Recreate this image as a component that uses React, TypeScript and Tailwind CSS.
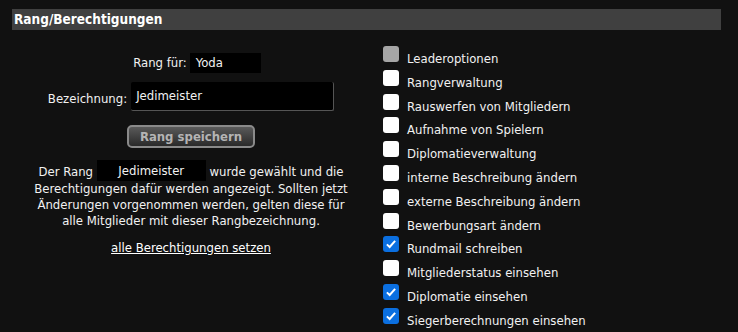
import React from 'react';

const rights: { label: string; state: 'disabled' | 'on' | 'off' }[] = [
  { label: 'Leaderoptionen', state: 'disabled' },
  { label: 'Rangverwaltung', state: 'off' },
  { label: 'Rauswerfen von Mitgliedern', state: 'off' },
  { label: 'Aufnahme von Spielern', state: 'off' },
  { label: 'Diplomatieverwaltung', state: 'off' },
  { label: 'interne Beschreibung ändern', state: 'off' },
  { label: 'externe Beschreibung ändern', state: 'off' },
  { label: 'Bewerbungsart ändern', state: 'off' },
  { label: 'Rundmail schreiben', state: 'on' },
  { label: 'Mitgliederstatus einsehen', state: 'off' },
  { label: 'Diplomatie einsehen', state: 'on' },
  { label: 'Siegerberechnungen einsehen', state: 'on' },
];

const Box: React.FC<{ state: 'disabled' | 'on' | 'off' }> = ({ state }) => {
  if (state === 'on') {
    return (
      <span className="w-4 h-4 rounded-[3px] bg-[#0b6fe0] flex items-center justify-center shrink-0">
        <svg viewBox="0 0 16 16" className="w-3 h-3">
          <path d="M2.5 8.5 L6.2 12 L13.5 3.8" fill="none" stroke="white" strokeWidth="2.6" />
        </svg>
      </span>
    );
  }
  return (
    <span
      className={
        state === 'disabled'
          ? 'w-4 h-4 rounded-[3px] bg-[#a6a6a6] shrink-0'
          : 'w-4 h-4 rounded-[3px] bg-white shrink-0'
      }
    />
  );
};

export default function App() {
  return (
    <div
      className="w-[738px] h-[332px] bg-[#111111] text-[#f2f2f2] text-[13px] overflow-hidden"
      style={{ fontFamily: '"DejaVu Sans Condensed", "Liberation Sans", sans-serif' }}
    >
      <div className="pt-[9px] px-3">
        <div className="h-[21px] w-[709px] bg-[#404040] flex items-center px-[2px] font-bold text-[13.5px] text-white">
          Rang/Berechtigungen
        </div>
      </div>

      <div className="flex px-3">
        {/* left column */}
        <div className="w-[358px] flex flex-col items-center pt-[23px]">
          <div className="flex items-center h-[20px] ml-[12px]">
            <span className="mr-[3px]">Rang für:</span>
            <span className="bg-black w-[71px] h-[20px] px-[6px] flex items-center">Yoda</span>
          </div>

          <div className="flex items-center mt-[9px]">
            <span className="mr-[4px] pt-[4px]">Bezeichnung:</span>
            <div className="bg-black w-[203px] h-[29px] px-[5px] flex items-center border-r border-b border-[#555] rounded-[2px]">
              Jedimeister
            </div>
          </div>

          <button className="mt-[14px] w-[128px] h-[23px] rounded-[5px] border-2 border-[#8a8a8a] bg-gradient-to-b from-[#5a5a5a] to-[#2a2a2a] text-[#b4b4b4] font-bold text-[13px] flex items-center justify-center">
            Rang speichern
          </button>

          <p className="mt-[15px] w-[326px] text-center leading-[16px]">
            Der Rang{' '}
            <span className="inline-block bg-black w-[109px] h-[21px] align-middle leading-[21px] -mt-[3px]">
              Jedimeister
            </span>{' '}
            wurde gewählt und die Berechtigungen dafür werden angezeigt. Sollten jetzt Änderungen vorgenommen werden,
            gelten diese für alle Mitglieder mit dieser Rangbezeichnung.
          </p>

          <a href="#" className="mt-[9px] underline text-white">
            alle Berechtigungen setzen
          </a>
        </div>

        {/* right column */}
        <div className="flex flex-col pl-[13px] pt-[16px]">
          {rights.map((r) => (
            <label key={r.label} className="flex items-start h-[23.8px] gap-[8px]">
              <Box state={r.state} />
              <span className="mt-[5px] leading-[16px]">{r.label}</span>
            </label>
          ))}
        </div>
      </div>
    </div>
  );
}
